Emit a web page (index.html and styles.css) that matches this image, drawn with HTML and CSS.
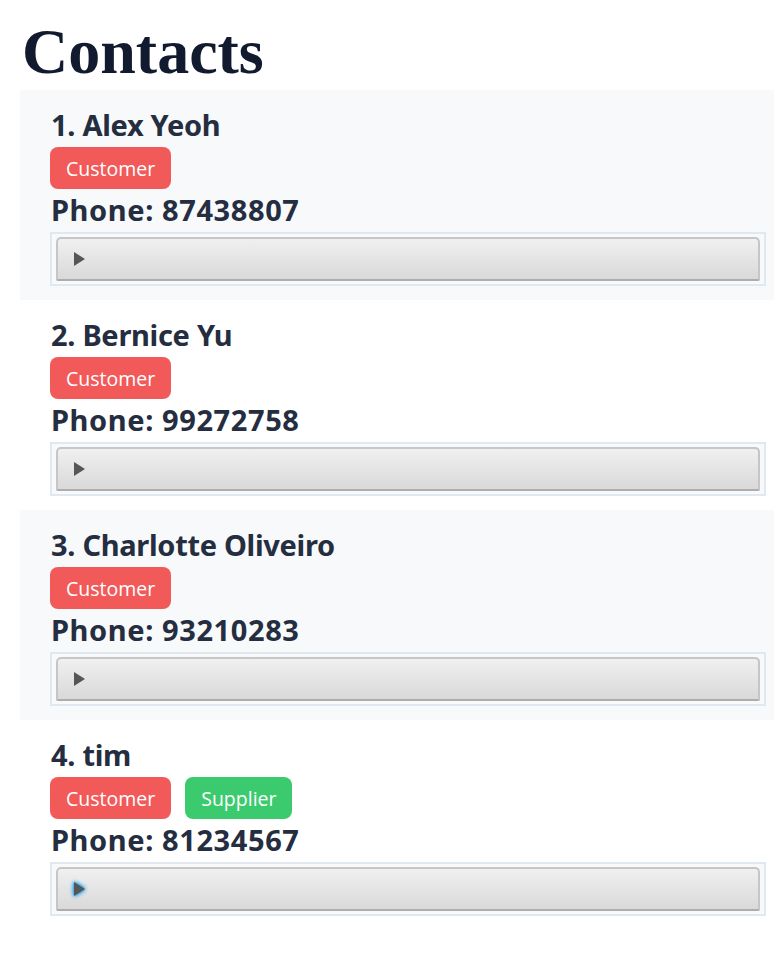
FILE: index.html
```html
<!DOCTYPE html>
<html>
<head>
<meta charset="utf-8">
<link rel="stylesheet" href="styles.css">
</head>
<body>
<h1 class="title">Contacts</h1>
<div class="list">
  <div class="card shaded">
    <div class="name">1. Alex Yeoh</div>
    <div class="tags"><span class="tag customer">Customer</span></div>
    <div class="phone">Phone: 87438807</div>
    <div class="details"><div class="summary"><span class="tri"></span></div></div>
  </div>
  <div class="card">
    <div class="name">2. Bernice Yu</div>
    <div class="tags"><span class="tag customer">Customer</span></div>
    <div class="phone">Phone: 99272758</div>
    <div class="details"><div class="summary"><span class="tri"></span></div></div>
  </div>
  <div class="card shaded">
    <div class="name">3. Charlotte Oliveiro</div>
    <div class="tags"><span class="tag customer">Customer</span></div>
    <div class="phone">Phone: 93210283</div>
    <div class="details"><div class="summary"><span class="tri"></span></div></div>
  </div>
  <div class="card">
    <div class="name">4. tim</div>
    <div class="tags"><span class="tag customer">Customer</span><span class="tag supplier">Supplier</span></div>
    <div class="phone">Phone: 81234567</div>
    <div class="details"><div class="summary"><span class="tri focus"></span></div></div>
  </div>
</div>
</body>
</html>
```

FILE: styles.css
```css
html, body {
  margin: 0;
  padding: 0;
  background: #ffffff;
  overflow: hidden;
}
body {
  padding-left: 20px;
}
.title {
  margin: 0;
  padding: 20px 0 0 2px;
  height: 90px;
  box-sizing: border-box;
  font-family: "Liberation Serif", serif;
  font-weight: 700;
  font-size: 64px;
  line-height: 64px;
  color: #111a2e;
}
.list {
  display: flex;
  flex-direction: column;
}
.card {
  height: 210px;
  box-sizing: border-box;
  padding: 18px 8px 14px 30px;
  background: #ffffff;
  display: flex;
  flex-direction: column;
}
.card.shaded {
  background: #f8f9fb;
}
.name, .phone {
  font-family: "Noto Sans", sans-serif;
  font-weight: 700;
  font-size: 29px;
  line-height: 34px;
  height: 34px;
  color: #252d40;
  padding-left: 1px;
  letter-spacing: -0.3px;
}
.phone {
  margin-top: 4px;
  letter-spacing: 0.6px;
}
.tags {
  display: flex;
  gap: 14px;
  margin-top: 5px;
  height: 42px;
}
.tag {
  display: flex;
  align-items: center;
  height: 42px;
  box-sizing: border-box;
  padding: 0 16px;
  border-radius: 8px;
  font-family: "Open Sans", sans-serif;
  font-size: 19.5px;
  color: #ffffff;
}
.customer { background: #f25a5a; }
.supplier { background: #3bcb6e; }
.details {
  margin-top: 5px;
  height: 54px;
  box-sizing: border-box;
  border: 2px solid #e1e8f0;
  padding: 3px 4px;
  background: #f8f9fb;
}
.summary {
  height: 44px;
  box-sizing: border-box;
  border: 2px solid #c6c6c6;
  border-bottom-color: #adadad;
  border-radius: 5px 5px 2px 2px;
  background: linear-gradient(#f0f0f0, #d9d9d9);
  display: flex;
  align-items: center;
  padding-left: 16px;
}
.tri {
  width: 0;
  height: 0;
  border-top: 7px solid transparent;
  border-bottom: 7px solid transparent;
  border-left: 11px solid #565656;
}
.tri.focus {
  filter: drop-shadow(0 0 2px #1aa0ee) drop-shadow(0 0 1px #1aa0ee);
}
```
